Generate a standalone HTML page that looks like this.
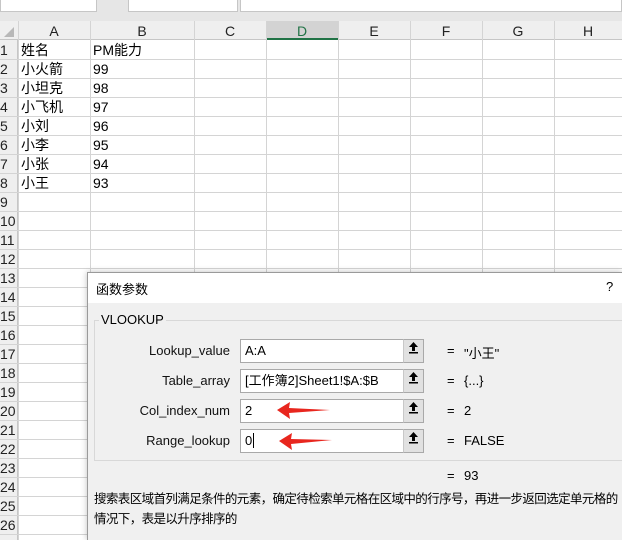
<!DOCTYPE html>
<html><head><meta charset="utf-8"><style>
*{margin:0;padding:0;box-sizing:border-box}
html,body{width:622px;height:540px;overflow:hidden}
body{background:#fff;position:relative;font-family:"Liberation Sans","Noto Sans CJK SC",sans-serif;font-size:14px;color:#000}
.a{position:absolute}
.vl{position:absolute;top:21px;height:519px;width:1px;background:#d4d4d4}
.hl{position:absolute;left:0;width:622px;height:1px;background:#d4d4d4}
.ch{position:absolute;top:21px;height:19px;text-align:center;line-height:20px;font-size:14px;color:#222}
.rn{position:absolute;left:0;width:18px;height:19px;line-height:19px;font-size:14px;color:#222}
.c{position:absolute;height:19px;line-height:19px;font-size:14px}
.lab{position:absolute;right:392px;font-size:13px;color:#111;text-align:right;width:140px}
.inp{position:absolute;left:240px;width:164px;height:24px;background:#fff;border:1px solid #a9a9a9;font-size:13px;line-height:22px;padding-left:4px}
.btn{position:absolute;left:403px;width:21px;height:24px;background:#e1e1e1;border:1px solid #a9a9a9;border-left:1px solid #c8c8c8}
.eq{position:absolute;left:447px;font-size:13px}
.val{position:absolute;left:464px;font-size:13px}
</style></head><body>
<div class="a" style="left:0;top:0;width:622px;height:21px;background:#e6e6e6"></div>
<div class="a" style="left:0;top:0;width:97px;height:12px;background:#fff;border:1px solid #c6c6c6;border-top:none"></div>
<div class="a" style="left:128px;top:0;width:110px;height:12px;background:#fff;border:1px solid #c6c6c6;border-top:none"></div>
<div class="a" style="left:240px;top:0;width:382px;height:12px;background:#fff;border:1px solid #c6c6c6;border-top:none"></div>
<div class="a" style="left:0;top:21px;width:622px;height:19px;background:#efefef;border-bottom:1px solid #c6c6c6"></div>
<div class="a" style="left:0;top:40px;width:18px;height:500px;background:#efefef;border-right:1px solid #c6c6c6"></div>
<div class="a" style="left:266px;top:21px;width:72px;height:19px;background:#d3d3d3;border-bottom:2px solid #217346"></div>
<div class="a" style="left:4px;top:27px;width:0;height:0;border-left:10px solid transparent;border-bottom:10px solid #b8b8b8"></div>
<div class="vl" style="left:18px"></div><div class="vl" style="left:90px"></div><div class="vl" style="left:194px"></div><div class="vl" style="left:266px"></div><div class="vl" style="left:338px"></div><div class="vl" style="left:410px"></div><div class="vl" style="left:482px"></div><div class="vl" style="left:554px"></div>
<div class="ch" style="left:18px;width:72px">A</div><div class="ch" style="left:90px;width:104px">B</div><div class="ch" style="left:194px;width:72px">C</div><div class="ch" style="left:266px;width:72px;color:#217346">D</div><div class="ch" style="left:338px;width:72px">E</div><div class="ch" style="left:410px;width:72px">F</div><div class="ch" style="left:482px;width:72px">G</div><div class="ch" style="left:554px;width:68px">H</div>
<div class="hl" style="top:59px"></div><div class="hl" style="top:78px"></div><div class="hl" style="top:97px"></div><div class="hl" style="top:116px"></div><div class="hl" style="top:135px"></div><div class="hl" style="top:154px"></div><div class="hl" style="top:173px"></div><div class="hl" style="top:192px"></div><div class="hl" style="top:211px"></div><div class="hl" style="top:230px"></div><div class="hl" style="top:249px"></div><div class="hl" style="top:268px"></div><div class="hl" style="top:287px"></div><div class="hl" style="top:306px"></div><div class="hl" style="top:325px"></div><div class="hl" style="top:344px"></div><div class="hl" style="top:363px"></div><div class="hl" style="top:382px"></div><div class="hl" style="top:401px"></div><div class="hl" style="top:420px"></div><div class="hl" style="top:439px"></div><div class="hl" style="top:458px"></div><div class="hl" style="top:477px"></div><div class="hl" style="top:496px"></div><div class="hl" style="top:515px"></div><div class="hl" style="top:534px"></div>
<div class="rn" style="top:41px">1</div><div class="rn" style="top:60px">2</div><div class="rn" style="top:79px">3</div><div class="rn" style="top:98px">4</div><div class="rn" style="top:117px">5</div><div class="rn" style="top:136px">6</div><div class="rn" style="top:155px">7</div><div class="rn" style="top:174px">8</div><div class="rn" style="top:193px">9</div><div class="rn" style="top:212px">10</div><div class="rn" style="top:231px">11</div><div class="rn" style="top:250px">12</div><div class="rn" style="top:269px">13</div><div class="rn" style="top:288px">14</div><div class="rn" style="top:307px">15</div><div class="rn" style="top:326px">16</div><div class="rn" style="top:345px">17</div><div class="rn" style="top:364px">18</div><div class="rn" style="top:383px">19</div><div class="rn" style="top:402px">20</div><div class="rn" style="top:421px">21</div><div class="rn" style="top:440px">22</div><div class="rn" style="top:459px">23</div><div class="rn" style="top:478px">24</div><div class="rn" style="top:497px">25</div><div class="rn" style="top:516px">26</div>
<div class="c" style="left:21px;top:41px">姓名</div><div class="c" style="left:93px;top:41px">PM能力</div>
<div class="c" style="left:21px;top:60px">小火箭</div><div class="c" style="left:93px;top:60px">99</div>
<div class="c" style="left:21px;top:79px">小坦克</div><div class="c" style="left:93px;top:79px">98</div>
<div class="c" style="left:21px;top:98px">小飞机</div><div class="c" style="left:93px;top:98px">97</div>
<div class="c" style="left:21px;top:117px">小刘</div><div class="c" style="left:93px;top:117px">96</div>
<div class="c" style="left:21px;top:136px">小李</div><div class="c" style="left:93px;top:136px">95</div>
<div class="c" style="left:21px;top:155px">小张</div><div class="c" style="left:93px;top:155px">94</div>
<div class="c" style="left:21px;top:174px">小王</div><div class="c" style="left:93px;top:174px">93</div>

<div class="a" style="left:87px;top:272px;width:535px;height:268px;background:#f0f0f0;border:1px solid #9a9a9a;border-right:none;border-bottom:none;box-shadow:0 0 6px rgba(0,0,0,.25);overflow:hidden"></div>
<div class="a" style="left:88px;top:273px;width:534px;height:30px;background:#fff"></div>
<div class="a" style="left:96px;top:279px;font-size:13px">函数参数</div>
<div class="a" style="left:606px;top:279px;font-size:13px">?</div>
<div class="a" style="left:94px;top:320px;width:528px;height:141px;border:1px solid #d8d8d8;border-right:none"></div>
<div class="a" style="left:99px;top:312px;font-size:13px;background:#f0f0f0;padding:0 2px">VLOOKUP</div>

<div class="lab" style="top:343px">Lookup_value</div>
<div class="lab" style="top:373px">Table_array</div>
<div class="lab" style="top:403px">Col_index_num</div>
<div class="lab" style="top:433px">Range_lookup</div>
<div class="inp" style="top:339px">A:A</div><div class="btn" style="top:339px"></div>
<div class="inp" style="top:369px">[工作簿2]Sheet1!$A:$B</div><div class="btn" style="top:369px"></div>
<div class="inp" style="top:399px">2</div><div class="btn" style="top:399px"></div>
<div class="inp" style="top:429px">0<span style="border-left:1px solid #000;margin-left:1px"></span></div><div class="btn" style="top:429px"></div>
<svg class="a" style="left:403px;top:339px" width="21" height="120">
<g fill="#000"><path d="M10.5 3 L6 8 H9 V12 H12 V8 H15 Z"/><rect x="6" y="13" width="9" height="1.5"/></g>
<g fill="#000" transform="translate(0,30)"><path d="M10.5 3 L6 8 H9 V12 H12 V8 H15 Z"/><rect x="6" y="13" width="9" height="1.5"/></g>
<g fill="#000" transform="translate(0,60)"><path d="M10.5 3 L6 8 H9 V12 H12 V8 H15 Z"/><rect x="6" y="13" width="9" height="1.5"/></g>
<g fill="#000" transform="translate(0,90)"><path d="M10.5 3 L6 8 H9 V12 H12 V8 H15 Z"/><rect x="6" y="13" width="9" height="1.5"/></g>
</svg>
<div class="eq" style="top:343px">=</div><div class="val" style="top:343px">"小王"</div>
<div class="eq" style="top:373px">=</div><div class="val" style="top:373px">{...}</div>
<div class="eq" style="top:403px">=</div><div class="val" style="top:403px">2</div>
<div class="eq" style="top:433px">=</div><div class="val" style="top:433px">FALSE</div>
<div class="eq" style="top:468px">=</div><div class="val" style="top:468px">93</div>
<svg class="a" style="left:260px;top:395px" width="90" height="60">
<path d="M17 15 L30 7 L29 13 L70 15 L29 18 L30 24 Z" fill="#e8261e"/>
<path d="M19 46 L32 38 L31 44 L72 45 L31 49 L32 55 Z" fill="#e8261e"/>
</svg>
<div class="a" style="left:94px;top:488px;width:528px;overflow:hidden;font-size:12.5px;letter-spacing:-0.6px;white-space:nowrap">搜索表区域首列满足条件的元素，确定待检索单元格在区域中的行序号，再进一步返回选定单元格的</div>
<div class="a" style="left:94px;top:508px;font-size:12.5px;letter-spacing:-0.6px;white-space:nowrap">情况下，表是以升序排序的</div>
</body></html>
